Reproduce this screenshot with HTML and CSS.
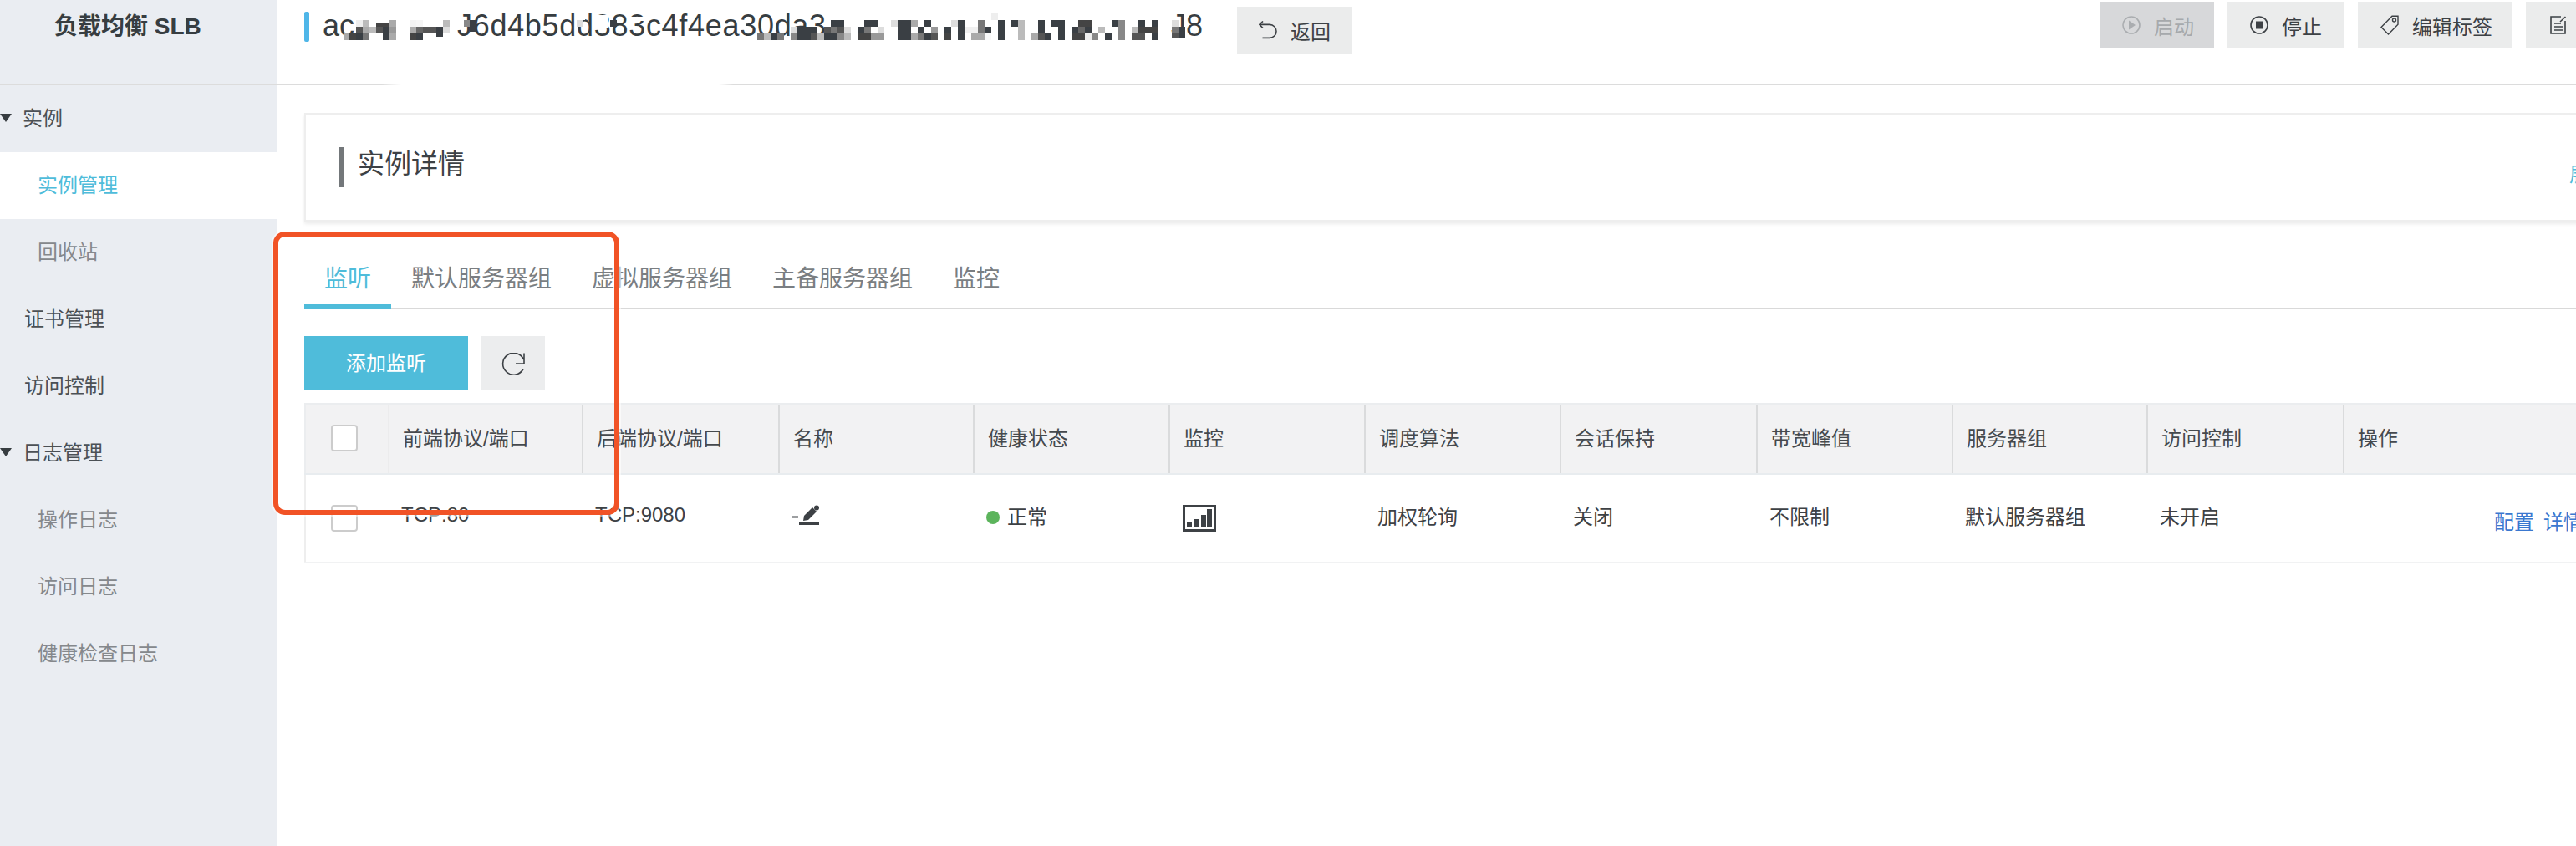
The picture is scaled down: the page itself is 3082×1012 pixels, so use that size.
FILE: index.html
```html
<!DOCTYPE html>
<html>
<head>
  <meta charset="utf-8">
  <title>负载均衡 SLB</title>
  <link rel="stylesheet" href="styles.css">
</head>

<body>
<div class="app">
  <!-- 左侧菜单 -->
  <aside class="side">
    <div class="side-head">负载均衡 SLB</div>
    <ul class="menu">
      <li class="menu-item group"><i class="caret"></i>实例</li>
      <li class="menu-item sub active">实例管理</li>
      <li class="menu-item sub">回收站</li>
      <li class="menu-item">证书管理</li>
      <li class="menu-item">访问控制</li>
      <li class="menu-item group"><i class="caret"></i>日志管理</li>
      <li class="menu-item sub">操作日志</li>
      <li class="menu-item sub">访问日志</li>
      <li class="menu-item sub">健康检查日志</li>
    </ul>
  </aside>

  <main class="main">
    <!-- 顶部 -->
    <header class="top">
      <div class="title">
        <i class="title-bar"></i>
        <div class="title-id">
          <span class="id-a">ac</span><span class="id-b">J6d4b5dd383c4f4ea30da3</span><span class="id-c">J8</span>
          <svg class="mosaic" width="1060" height="36" viewBox="386 14 1060 36">
            <g>
              <rect x="426" y="24" width="8" height="8" fill="#eee"/><rect x="434" y="24" width="8" height="8" fill="#bbb"/><rect x="450" y="28" width="16" height="4" fill="#444"/><rect x="466" y="24" width="8" height="8" fill="#aaa"/><rect x="490" y="24" width="8" height="8" fill="#f2f2f2"/><rect x="498" y="24" width="8" height="8" fill="#f5f5f5"/><rect x="530" y="24" width="8" height="8" fill="#bbb"/><rect x="555" y="24" width="7" height="8" fill="#888"/><rect x="562" y="24" width="8" height="8" fill="#3a3f44"/>
              <rect x="426" y="32" width="8" height="8" fill="#555"/><rect x="434" y="32" width="8" height="8" fill="#aaa"/><rect x="442" y="32" width="8" height="8" fill="#bbb"/><rect x="450" y="32" width="8" height="8" fill="#555"/><rect x="458" y="32" width="8" height="8" fill="#3a3f44"/><rect x="466" y="32" width="8" height="8" fill="#999"/><rect x="490" y="32" width="8" height="8" fill="#aaa"/><rect x="498" y="32" width="8" height="8" fill="#666"/><rect x="506" y="32" width="16" height="8" fill="#555"/><rect x="522" y="32" width="8" height="8" fill="#3a3f44"/><rect x="530" y="32" width="8" height="8" fill="#ddd"/><rect x="562" y="32" width="8" height="6" fill="#3a3f44"/>
              <rect x="412" y="40" width="6" height="8" fill="#aaa"/><rect x="418" y="40" width="8" height="8" fill="#444"/><rect x="426" y="40" width="8" height="8" fill="#3a3f44"/><rect x="434" y="40" width="8" height="8" fill="#777"/><rect x="458" y="40" width="8" height="8" fill="#3a3f44"/><rect x="466" y="40" width="8" height="8" fill="#aaa"/><rect x="490" y="40" width="8" height="8" fill="#444"/><rect x="498" y="40" width="8" height="8" fill="#3a3f44"/><rect x="522" y="40" width="8" height="4" fill="#3a3f44"/>
            </g>
            <g>
              <rect x="690" y="18" width="10" height="6" fill="#fff"/><rect x="690" y="24" width="8" height="8" fill="#ddd"/><rect x="709" y="18" width="19" height="15" fill="#fff"/><rect x="730" y="24" width="8" height="8" fill="#3a3f44"/><rect x="752" y="20" width="18" height="5" fill="#fff"/>
            </g>
            <g>
              <rect x="1186" y="16" width="8" height="8" fill="#eee"/>
              <rect x="994" y="24" width="16" height="8" fill="#3a3f44"/><rect x="1034" y="24" width="16" height="8" fill="#3a3f44"/><rect x="1066" y="24" width="8" height="8" fill="#ddd"/><rect x="1074" y="24" width="16" height="8" fill="#3a3f44"/><rect x="1090" y="24" width="8" height="8" fill="#aaa"/><rect x="1106" y="24" width="8" height="8" fill="#3a3f44"/><rect x="1138" y="24" width="8" height="8" fill="#ddd"/><rect x="1146" y="24" width="8" height="8" fill="#3a3f44"/><rect x="1170" y="24" width="8" height="8" fill="#777"/><rect x="1194" y="24" width="8" height="8" fill="#3a3f44"/><rect x="1210" y="24" width="8" height="8" fill="#3a3f44"/><rect x="1218" y="24" width="8" height="8" fill="#bbb"/><rect x="1242" y="24" width="8" height="8" fill="#3a3f44"/><rect x="1258" y="24" width="16" height="8" fill="#3a3f44"/><rect x="1290" y="24" width="16" height="8" fill="#444"/><rect x="1330" y="24" width="8" height="8" fill="#3a3f44"/><rect x="1338" y="24" width="8" height="8" fill="#888"/><rect x="1362" y="24" width="8" height="8" fill="#3a3f44"/><rect x="1378" y="24" width="8" height="8" fill="#3a3f44"/><rect x="1402" y="24" width="8" height="8" fill="#ddd"/>
              <rect x="946" y="32" width="8" height="8" fill="#ddd"/><rect x="954" y="32" width="24" height="8" fill="#3a3f44"/><rect x="986" y="32" width="8" height="8" fill="#555"/><rect x="994" y="32" width="8" height="8" fill="#777"/><rect x="1002" y="32" width="8" height="8" fill="#555"/><rect x="1010" y="32" width="8" height="8" fill="#ddd"/><rect x="1026" y="32" width="8" height="8" fill="#3a3f44"/><rect x="1034" y="32" width="8" height="8" fill="#777"/><rect x="1050" y="32" width="8" height="8" fill="#ddd"/><rect x="1074" y="32" width="16" height="8" fill="#3a3f44"/><rect x="1098" y="32" width="8" height="8" fill="#3a3f44"/><rect x="1114" y="32" width="8" height="8" fill="#999"/><rect x="1130" y="32" width="8" height="8" fill="#3a3f44"/><rect x="1146" y="32" width="8" height="8" fill="#3a3f44"/><rect x="1154" y="32" width="16" height="8" fill="#f0f0f0"/><rect x="1170" y="32" width="8" height="8" fill="#777"/><rect x="1178" y="32" width="8" height="8" fill="#3a3f44"/><rect x="1194" y="32" width="8" height="8" fill="#3a3f44"/><rect x="1218" y="32" width="8" height="8" fill="#bbb"/><rect x="1242" y="32" width="8" height="8" fill="#3a3f44"/><rect x="1266" y="32" width="8" height="8" fill="#3a3f44"/><rect x="1282" y="32" width="8" height="8" fill="#3a3f44"/><rect x="1290" y="32" width="8" height="8" fill="#666"/><rect x="1298" y="32" width="8" height="8" fill="#3a3f44"/><rect x="1314" y="32" width="8" height="8" fill="#bbb"/><rect x="1338" y="32" width="8" height="8" fill="#888"/><rect x="1354" y="32" width="8" height="8" fill="#bbb"/><rect x="1362" y="32" width="24" height="8" fill="#444"/><rect x="1402" y="32" width="8" height="8" fill="#777"/><rect x="1410" y="32" width="8" height="8" fill="#3a3f44"/>
              <rect x="906" y="40" width="8" height="8" fill="#777"/><rect x="914" y="40" width="8" height="8" fill="#bbb"/><rect x="922" y="40" width="8" height="8" fill="#3a3f44"/><rect x="930" y="40" width="8" height="8" fill="#777"/><rect x="946" y="40" width="8" height="8" fill="#888"/><rect x="954" y="40" width="16" height="8" fill="#3a3f44"/><rect x="970" y="40" width="8" height="8" fill="#555"/><rect x="978" y="40" width="8" height="8" fill="#bbb"/><rect x="986" y="40" width="16" height="8" fill="#3a3f44"/><rect x="1002" y="40" width="8" height="8" fill="#888"/><rect x="1010" y="40" width="8" height="8" fill="#bbb"/><rect x="1026" y="40" width="16" height="8" fill="#444"/><rect x="1042" y="40" width="16" height="8" fill="#999"/><rect x="1074" y="40" width="16" height="8" fill="#3a3f44"/><rect x="1090" y="40" width="8" height="8" fill="#aaa"/><rect x="1098" y="40" width="8" height="8" fill="#777"/><rect x="1106" y="40" width="8" height="8" fill="#3a3f44"/><rect x="1114" y="40" width="8" height="8" fill="#555"/><rect x="1130" y="40" width="8" height="8" fill="#444"/><rect x="1146" y="40" width="8" height="8" fill="#3a3f44"/><rect x="1162" y="40" width="16" height="8" fill="#aaa"/><rect x="1178" y="40" width="8" height="8" fill="#f8f8f8"/><rect x="1194" y="40" width="8" height="8" fill="#3a3f44"/><rect x="1218" y="40" width="8" height="8" fill="#bbb"/><rect x="1234" y="40" width="8" height="8" fill="#aaa"/><rect x="1242" y="40" width="8" height="8" fill="#555"/><rect x="1250" y="40" width="8" height="8" fill="#3a3f44"/><rect x="1266" y="40" width="8" height="8" fill="#3a3f44"/><rect x="1282" y="40" width="16" height="8" fill="#444"/><rect x="1298" y="40" width="8" height="8" fill="#eee"/><rect x="1306" y="40" width="8" height="8" fill="#888"/><rect x="1322" y="40" width="8" height="8" fill="#3a3f44"/><rect x="1338" y="40" width="8" height="8" fill="#888"/><rect x="1354" y="40" width="16" height="8" fill="#555"/><rect x="1378" y="40" width="8" height="8" fill="#3a3f44"/><rect x="1402" y="40" width="8" height="6" fill="#555"/><rect x="1410" y="40" width="8" height="6" fill="#3a3f44"/>
            </g>
          </svg>
        </div>
      </div>
      <button class="btn btn-back">
        <svg width="22" height="22" viewBox="0 0 22 22" fill="none" stroke="#3d4145" stroke-width="1.6"><path d="M5 .5.8 4.4 5 8.5M1 4.4h12c4.500 0 8 3.600 8 8s-3.500 8-8 8H4.500"/></svg>
        返回
      </button>
      <div class="actions">
        <button class="btn disabled">
          <svg width="22" height="22" viewBox="0 0 22 22"><circle cx="11" cy="11" r="10" fill="none" stroke="#aaadb0" stroke-width="1.6"/><path d="M8 5.500 16 11l-8 5.500z" fill="#aaadb0"/></svg>
          启动
        </button>
        <button class="btn btn-stop">
          <svg width="22" height="22" viewBox="0 0 22 22"><circle cx="11" cy="11" r="10" fill="none" stroke="#3d4145" stroke-width="1.6"/><rect x="7" y="6.500" width="8" height="9" fill="#3d4145"/></svg>
          停止
        </button>
        <button class="btn">
          <svg width="22" height="24" viewBox="0 0 22 24" fill="none" stroke="#3d4145" stroke-width="1.4"><path d="M14 1.200h7v10L9.500 23 1 14.500z"/><circle cx="16.500" cy="6" r="2"/></svg>
          编辑标签
        </button>
        <button class="btn btn-note">
          <svg width="20" height="22" viewBox="0 0 20 22" fill="none" stroke="#3d4145" stroke-width="1.6"><path d="M13 1H1v20h17V6M18.500 1 12 7M5 9h8M5 13h10M5 17h10"/></svg>
        </button>
      </div>
    </header>
    <div class="top-line"></div>

    <section class="card">
      <h2 class="card-title"><i class="card-bar"></i><span class="card-text">实例详情</span></h2>
      <a class="card-more">展开</a>
    </section>

    <ul class="tabs">
      <li class="tab active">监听</li>
      <li class="tab">默认服务器组</li>
      <li class="tab">虚拟服务器组</li>
      <li class="tab">主备服务器组</li>
      <li class="tab">监控</li>
    </ul>

    <div class="tools">
      <button class="btn-add">添加监听</button>
      <button class="btn-refresh">
        <svg width="28" height="28" viewBox="0 0 28 28" fill="none" stroke="#3d4145" stroke-width="1.6"><path d="M26.500 8A13 13 0 1 0 26 19.500M27 .5V13H17"/></svg>
      </button>
    </div>

    <table class="grid">
      <colgroup>
        <col class="c-check"><col class="c-a"><col class="c-d"><col class="c-c"><col class="c-b"><col class="c-b"><col class="c-b"><col class="c-d"><col class="c-b"><col class="c-c"><col class="c-d"><col class="c-op">
      </colgroup>
      <thead>
        <tr>
          <th class="check-cell"><i class="check"></i></th>
          <th class="first">前端协议/端口</th>
          <th>后端协议/端口</th>
          <th>名称</th>
          <th>健康状态</th>
          <th>监控</th>
          <th>调度算法</th>
          <th>会话保持</th>
          <th>带宽峰值</th>
          <th>服务器组</th>
          <th>访问控制</th>
          <th>操作</th>
        </tr>
      </thead>
      <tbody>
        <tr>
          <td class="check-cell"><i class="check"></i></td>
          <td>TCP:80</td>
          <td>TCP:9080</td>
          <td class="name-cell">
            <svg width="32" height="26" viewBox="0 0 32 26"><rect y="14.500" width="7" height="2" fill="#3d4145"/><rect x="8" y="22" width="24" height="3" fill="#3d4145"/><path d="M13 20l1-6L24 4l5 5-10 10z" fill="#3d4145"/><circle cx="29" cy="4.500" r="3" fill="#3d4145"/></svg>
          </td>
          <td><i class="dot"></i>正常</td>
          <td class="chart-cell">
            <svg width="40" height="32" viewBox="0 0 40 32"><rect x="1.500" y="1.500" width="37" height="29" fill="none" stroke="#3d4145" stroke-width="3"/><rect x="5" y="20" width="6" height="7" fill="#3d4145"/><rect x="14" y="17" width="6" height="10" fill="#3d4145"/><rect x="22" y="12" width="6" height="15" fill="#3d4145"/><rect x="29" y="5" width="6" height="22" fill="#3d4145"/></svg>
          </td>
          <td>加权轮询</td>
          <td>关闭</td>
          <td>不限制</td>
          <td>默认服务器组</td>
          <td>未开启</td>
          <td class="op-cell"><a>配置</a><a>详情</a></td>
        </tr>
      </tbody>
    </table>
  </main>

  <!-- 红框标注 -->
  <div class="mark"></div>
</div>
</body>

</html>
```
FILE: styles.css
```css
* {
  box-sizing: border-box;
}
html, body {
  margin: 0;
  height: 100%;
  overflow: hidden;
  background: #fff;
}
body {
  font-family: "Liberation Sans", "Noto Sans CJK SC", sans-serif;
  font-size: 24px;
  color: #3d4145;
}
ul {
  list-style: none;
  margin: 0;
  padding: 0;
}
i {
  font-style: normal;
}
.app {
  display: flex;
  height: 1012px;
  position: relative;
  overflow: hidden;
}

/* side */
.side {
  width: 332px;
  flex: none;
  background: #eaedf2;
}
.side-head {
  height: 102px;
  padding: 8px 0 0 65px;
  border-bottom: 2px solid #dcdcdc;
  font-size: 28px;
  line-height: 48px;
  font-weight: bold;
  color: #373d41;
}
.menu-item {
  height: 80px;
  line-height: 80px;
  padding-left: 29px;
  color: #4b5055;
  position: relative;
}
.menu-item.group {
  padding-left: 27px;
}
.menu-item.sub {
  padding-left: 45px;
  color: #85888c;
}
.menu-item.active {
  background: #fff;
  color: #4fbcda;
}
.caret {
  position: absolute;
  left: 0;
  top: 34px;
  border-top: 10px solid #373d41;
  border-left: 7px solid transparent;
  border-right: 7px solid transparent;
}

/* main */
.main {
  flex: 1;
  min-width: 0;
  overflow: hidden;
}
.top {
  height: 100px;
  padding-left: 32px;
  display: flex;
  align-items: flex-start;
  white-space: nowrap;
}
.top-line {
  height: 2px;
  background: linear-gradient(90deg, #dcdcdc 0, #dcdcdc 125px, #fff 148px, #fff 528px, #dcdcdc 545px);
}
.title {
  width: 1116px;
  flex: none;
  display: flex;
}
.title-bar {
  width: 6px;
  height: 36px;
  margin: 14px 16px 0 0;
  border-radius: 2px;
  background: #4fb6e8;
}
.title-id {
  position: relative;
  padding-top: 9px;
  font-size: 36px;
  line-height: 44px;
  color: #373d41;
  display: flex;
}
.id-a {
  width: 161px;
}
.id-b {
  width: 854px;
  letter-spacing: 0.7px;
}
.mosaic {
  position: absolute;
  left: 0;
  top: 14px;
}
.btn {
  height: 56px;
  padding: 0 24px 0 27px;
  border: 0;
  background: #ebecec;
  color: #3d4145;
  font: inherit;
  display: flex;
  flex: none;
  align-items: center;
  gap: 16px;
}
.btn-back {
  width: 138px;
  margin-top: 8px;
  padding-left: 26px;
}
.actions {
  margin: 2px 0 0 894px;
  display: flex;
  gap: 16px;
}
.btn.disabled {
  background: #d7d8da;
  color: #a6a9ac;
}
.btn-stop {
  width: 140px;
}
.btn-note {
  width: 80px;
  padding-left: 29px;
}

/* card */
.card {
  height: 130px;
  margin: 33px -10px 0 32px;
  padding-left: 40px;
  border: 2px solid #eeeeee;
  border-right: 0;
  box-shadow: 0 3px 4px rgba(0, 0, 0, .08);
  display: flex;
  justify-content: space-between;
  white-space: nowrap;
}
.card-title {
  margin: 39px 0 0;
  font-size: 32px;
  font-weight: normal;
  line-height: 40px;
  display: flex;
  gap: 16px;
}
.card-bar {
  width: 6px;
  height: 48px;
  background: #73777a;
}
.card-more {
  margin: 52px -30px 0 0;
  width: 48px;
  color: #4fbcda;
}

/* tabs */
.tabs {
  margin: 35px 0 0 32px;
  height: 70px;
  border-bottom: 2px solid #d9d9d9;
  display: flex;
}
.tab {
  height: 70px;
  padding: 0 24px;
  font-size: 28px;
  line-height: 67px;
  color: #7a7e82;
}
.tab.active {
  color: #4fbcda;
  border-bottom: 6px solid #4fbcda;
}

/* tools */
.tools {
  margin: 32px 0 16px 32px;
  display: flex;
  gap: 16px;
}
.btn-add {
  width: 196px;
  height: 64px;
  padding: 0 0 4px;
  border: 0;
  background: #4fbcda;
  color: #fff;
  font: inherit;
}
.btn-refresh {
  width: 76px;
  height: 64px;
  padding: 3px 0 0;
  border: 0;
  background: #ecedee;
  display: flex;
  align-items: center;
  justify-content: center;
}

/* table */
.grid {
  width: 2738px;
  margin-left: 32px;
  table-layout: fixed;
  border-collapse: collapse;
  white-space: nowrap;
}
.c-check { width: 100px; }
.c-a { width: 232px; }
.c-b { width: 234px; }
.c-c { width: 233px; }
.c-d { width: 235px; }
.c-op { width: 299px; }
th {
  height: 84px;
  padding: 0 0 6px 16px;
  background: #f2f2f3;
  border-top: 2px solid #ebedef;
  border-bottom: 2px solid #e8ecef;
  border-left: 2px solid #dadbdc;
  font-weight: normal;
  text-align: left;
  color: #45494d;
}
th.first {
  border-left-color: #ececed;
}
th.check-cell {
  border-left: 2px solid #ebedef;
  padding: 0 0 2px 30px;
}
td {
  height: 106px;
  padding: 0 0 8px 15px;
  border-bottom: 2px solid #f1f2f3;
}
td.check-cell {
  border-left: 2px solid #eeeeee;
  padding: 0 0 0 30px;
}
.check {
  display: block;
  width: 32px;
  height: 32px;
  background: #fff;
  border: 2px solid #cccccc;
  border-radius: 4px;
}
td svg {
  display: block;
}
.name-cell {
  padding-left: 16px;
}
.chart-cell {
  padding: 0 0 0 16px;
}
.dot {
  display: inline-block;
  width: 16px;
  height: 16px;
  margin-right: 9px;
  border-radius: 50%;
  background: #5cb45c;
}
.op-cell {
  padding: 4px 12px 0 0;
  text-align: right;
  color: #3a78d0;
}
.op-cell a + a {
  margin-left: 11px;
}

/* red mark */
.mark {
  position: absolute;
  left: 327px;
  top: 277px;
  width: 414px;
  height: 339px;
  border: 6px solid #f15326;
  border-radius: 14px;
  box-shadow: 0 0 0 2px rgba(255, 255, 255, .5);
}
```
